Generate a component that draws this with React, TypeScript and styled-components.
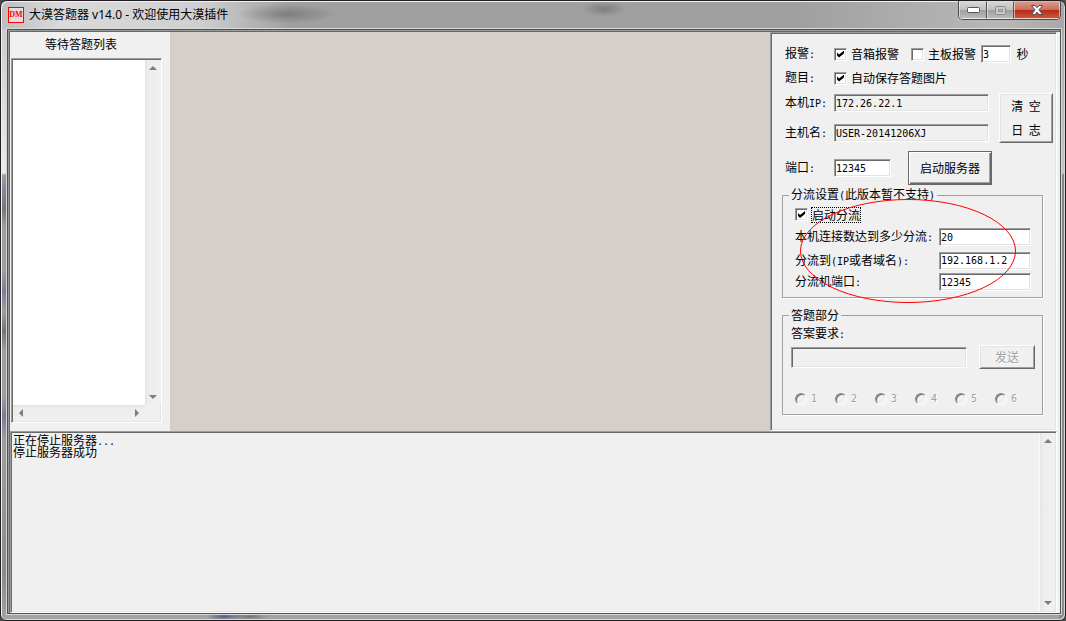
import React from "react";
import styled, { createGlobalStyle, css } from "styled-components";

const Global = createGlobalStyle`
  *, *::before, *::after { box-sizing: border-box; }
  html, body { margin: 0; background: #4b4b4b; }
  body, button, input { font: 12px/16px "Noto Sans CJK SC", sans-serif; color: #000; }
`;

const sunken = css`
  border: 1px solid;
  border-color: #9d9d9d #fff #fff #9d9d9d;
  box-shadow: inset 1px 1px #696969, inset -1px -1px #e3e3e3;
`;
const raised = css`
  border: 1px solid;
  border-color: #fff #696969 #696969 #fff;
  box-shadow: inset 1px 1px #e3e3e3, inset -1px -1px #a0a0a0;
`;

const Frame = styled.div`
  min-height: 100vh;
  display: flex;
  flex-direction: column;
  padding: 0 4px 6px 5px;
  border: 1px solid #201c22;
  border-radius: 7px 7px 6px 6px;
  box-shadow: inset 1px 1px #f2f2f2, inset -1px -1px #d8d8d8;
  background:
    radial-gradient(ellipse at center, #5e5e5e88, transparent 70%) 236px 3px / 100px 20px no-repeat,
    radial-gradient(ellipse at center, #66666699, transparent 70%) 580px 0 / 46px 16px no-repeat,
    radial-gradient(ellipse at center, #3c4a82cc, transparent 70%) 205px 100% / 36px 7px no-repeat,
    radial-gradient(ellipse at center, #55555599, transparent 70%) 228px 100% / 40px 7px no-repeat,
    linear-gradient(90deg, #bdbdbd 0, #dadada 60px, #cfcfcf 200px, #a0a0a0 290px, #a0a0a0 75%, #b8b8b8 94%, #a8a8a8 100%) 0 0 / 100% 28px no-repeat,
    linear-gradient(#c9c6c8 0, #eeeaea 172px, #a09da0 174px, #8582a0 190px, #777 208px, #a09da0 226px, #a09da0 270px, #7c7a9c 290px, #a09da0 310px, #757374 330px, #a09da0 350px, #a09da0 395px, #7c7a9c 415px, #a09da0 440px, #8b898b 575px, #a3a3a3 100%) 0 0 / 6px 100% no-repeat,
    linear-gradient(#a6a6a6 0, #c4c4c4 172px, #858585 174px, #8b8b8b 100%) 100% 0 / 6px 100% no-repeat,
    #a3a3a3;
`;

const TitleBar = styled.header`
  height: 27px;
  display: flex;
  align-items: center;
  padding-left: 2px;
`;
const AppIcon = styled.span`
  width: 16px;
  height: 16px;
  border: 1px solid #f00;
  color: #f00;
  background: #e2dcdc;
  font: bold 8px/14px "Liberation Serif", serif;
  display: flex;
  justify-content: center;
`;
const Title = styled.h1`
  flex: 1;
  margin: 0 0 0 5px;
  font: 12px/16px "Noto Sans", "Noto Sans CJK SC", sans-serif;
  white-space: nowrap;
`;
const Captions = styled.div`
  display: flex;
  align-self: flex-start;
  height: 19px;
  border: 1px solid #4c4a52;
  border-top: 0;
  border-radius: 0 0 5px 5px;
  overflow: hidden;
`;
const Caption = styled.button<{ $w: number; $close?: boolean }>`
  width: ${(p) => p.$w}px;
  padding: 0;
  border: 1px solid #ffffff88;
  border-right-color: ${(p) => (p.$close ? "#ffffff88" : "#55535a")};
  display: flex;
  align-items: center;
  justify-content: center;
  background: ${(p) =>
    p.$close
      ? "linear-gradient(#d99a8c 0, #cc6d5c 48%, #b32b15 50%, #d0553a 100%)"
      : "linear-gradient(#d5d5d5 0, #c0c0c0 48%, #9f9f9f 50%, #b9b9b9 100%)"};
`;

const Client = styled.main`
  flex: 1;
  display: flex;
  flex-direction: column;
  border: 1px solid #4e5250;
  outline: 1px solid #d4d8d6;
  margin: 1px 0 0 1px;
  padding: 1px 0 0 1px;
  background: #9b9b9b;
`;
const ClientInner = styled.div`
  flex: 1;
  display: flex;
  flex-direction: column;
  border-top: 1px solid #696969;
  border-left: 1px solid #696969;
  padding-right: 3px;
  background: #f0f0f0;
`;
const Upper = styled.div`
  display: flex;
`;

const Queue = styled.section`
  width: 160px;
  display: flex;
  flex-direction: column;
  padding: 0 8px 8px 0;
`;
const QueueTitle = styled.h2`
  margin: 0;
  padding: 4px 0 6px 35px;
  font: inherit;
`;
const QueueBox = styled.div`
  flex: 1;
  display: grid;
  grid-template: 1fr 16px / 1fr 16px;
  padding: 1px 0 1px 1px;
  margin-left: 1px;
  ${sunken}
  background: #f0f0f0;
`;
const QueueList = styled.ul`
  margin: 0;
  padding: 0;
  background: #fff;
`;
const Bar = styled.div<{ $row?: boolean }>`
  display: flex;
  flex-direction: ${(p) => (p.$row ? "row" : "column")};
  justify-content: space-between;
  background: linear-gradient(${(p) => (p.$row ? "180deg" : "90deg")}, #e3e3e3, #ededed 20%, #f0f0f0);
`;
const Arrow = styled.button`
  width: 16px;
  height: 16px;
  padding: 0;
  border: 0;
  background: none;
  display: flex;
  align-items: center;
  justify-content: center;
`;

const Canvas = styled.section`
  flex: 1;
  background: #d4cfc8;
`;

const Side = styled.form`
  width: 287px;
  padding: 9px 13px 15px 11px;
  ${sunken}
`;
const Row = styled.div<{ $h: number; $gap?: number }>`
  height: ${(p) => p.$h}px;
  display: flex;
  align-items: center;
  gap: ${(p) => p.$gap ?? 0}px;
  white-space: nowrap;
`;
const Settings = styled.div`
  padding-left: 3px;
  margin-right: -12px;
`;
const HostRows = styled.div`
  display: flex;
  gap: 10px;
  align-items: flex-start;
`;
const HostAction = styled.div`
  padding-top: 3px;
`;
const Name = styled.label`
  width: 49px;
  flex: none;
`;
const Half = styled.span`
  font: 10px/16px "DejaVu Sans Mono", monospace;
`;
const Field = styled.input<{ $w: number; $h?: number }>`
  width: ${(p) => p.$w}px;
  height: ${(p) => p.$h ?? 18}px;
  padding: 0 1px;
  border-radius: 0;
  outline: 0;
  font: 10px/14px "DejaVu Sans Mono", monospace;
  background: #fff;
  ${sunken}
  &:read-only, &:disabled { background: #f0f0f0; }
`;
const Check = styled.label<{ $w?: number; $focus?: boolean }>`
  display: flex;
  align-items: center;
  gap: 4px;
  width: ${(p) => (p.$w ? `${p.$w}px` : "auto")};
  span {
    line-height: 14px;
    outline: ${(p) => (p.$focus ? "1px dotted #000" : "0")};
  }
`;
const Tick = styled.input`
  appearance: none;
  width: 13px;
  height: 13px;
  margin: 0;
  background: #fff;
  ${sunken}
  &:checked::before {
    content: "";
    display: block;
    width: 7px;
    height: 7px;
    margin: 2px;
    background: #000;
    clip-path: polygon(0 29%, 29% 57%, 100% 0, 100% 43%, 29% 100%, 0 72%);
  }
`;
const Button = styled.button<{ $w: number; $h: number; $default?: boolean }>`
  width: ${(p) => p.$w}px;
  height: ${(p) => p.$h}px;
  flex: none;
  padding: 0;
  border-radius: 0;
  background: #f0f0f0;
  line-height: 24px;
  white-space: pre-line;
  ${raised}
  ${(p) =>
    p.$default &&
    css`
      border-color: #696969;
      box-shadow: inset 1px 1px #fff, inset -1px -1px #696969, inset -2px -2px #a0a0a0;
    `}
  &:disabled {
    color: #a0a0a0;
    line-height: 20px;
    text-shadow: 1px 1px #fff;
  }
`;

const Group = styled.fieldset`
  position: relative;
  min-width: 0;
  margin: 0 0 9px;
  padding: 0 0 5px 8px;
  border: 1px solid #a0a0a0;
  box-shadow: 1px 1px #fff;
  &:last-child { margin: 0; padding-bottom: 7px; }
`;
const Legend = styled.legend`
  padding: 0 2px;
  margin-left: -2px;
  line-height: 16px;
`;
const Options = styled.div`
  padding-left: 4px;
`;
const WideName = styled.label`
  width: 144px;
`;
const Mark = styled.svg`
  position: absolute;
  left: 16px;
  top: -6px;
  pointer-events: none;
`;
const Choices = styled.div`
  display: grid;
  grid-template-columns: repeat(6, 40px);
  padding-left: 4px;
  margin-top: 22px;
`;
const Choice = styled.label`
  display: flex;
  align-items: center;
  gap: 4px;
  color: #a0a0a0;
  text-shadow: 1px 1px #fff;
`;
const Radio = styled.input`
  appearance: none;
  width: 12px;
  height: 12px;
  margin: 0;
  border-radius: 50%;
  border: 1px solid;
  border-color: #8d8d8d #fff #fff #8d8d8d;
  box-shadow: inset 1px 1px #696969;
`;

const Log = styled.section`
  flex: 1;
  display: flex;
  min-height: 100px;
  padding: 1px;
  ${sunken}
`;
const LogText = styled.div`
  flex: 1;
  padding: 1px 0 0 1px;
  p { margin: 0; height: 12px; line-height: 12px; }
  ${Half} { line-height: 12px; }
`;
const LogBar = styled(Bar)`
  width: 16px;
  border-left: 1px solid #fafafa;
`;

const paths = {
  up: "M4 0L8 4H0Z",
  down: "M0 0H8L4 4Z",
  left: "M4 0V8L0 4Z",
  right: "M0 0L4 4L0 8Z",
};
const names = { up: "上", down: "下", left: "左", right: "右" };
function ScrollArrow({ dir }: { dir: keyof typeof paths }) {
  const tall = dir === "left" || dir === "right";
  return (
    <Arrow type="button" aria-label={names[dir]}>
      <svg width={tall ? 4 : 8} height={tall ? 8 : 4}>
        <path d={paths[dir]} fill="#7c7c7c" />
      </svg>
    </Arrow>
  );
}

export default function App() {
  return (
    <Frame>
      <Global />
      <TitleBar>
        <AppIcon>DM</AppIcon>
        <Title>大漠答题器 v14.0 - 欢迎使用大漠插件</Title>
        <Captions>
          <Caption $w={28} aria-label="最小化">
            <svg width="13" height="6"><rect x=".5" y=".5" width="12" height="5" rx="1" fill="#fff" stroke="#535666" /></svg>
          </Caption>
          <Caption $w={27} aria-label="最大化" disabled>
            <svg width="11" height="9" fill="none">
              <rect x=".5" y=".5" width="10" height="8" rx="1" fill="#c9c9c9" stroke="#8c8c8c" />
              <rect x="3.5" y="3.5" width="4" height="2" stroke="#8c8c8c" />
            </svg>
          </Caption>
          <Caption $w={46} $close aria-label="关闭">
            <svg width="12" height="10">
              <path d="M.5 .5H4L6 2.800L8 .5H11.500L8 5L11.500 9.500H8L6 7.200L4 9.500H.5L4 5Z" fill="#fff" stroke="#53525e" />
            </svg>
          </Caption>
        </Captions>
      </TitleBar>
      <Client>
        <ClientInner>
          <Upper>
            <Queue>
              <QueueTitle>等待答题列表</QueueTitle>
              <QueueBox>
                <QueueList />
                <Bar><ScrollArrow dir="up" /><ScrollArrow dir="down" /></Bar>
                <Bar $row><ScrollArrow dir="left" /><ScrollArrow dir="right" /></Bar>
              </QueueBox>
            </Queue>
            <Canvas />
            <Side>
              <Settings>
                <Row $h={24}>
                  <Name as="span">报警<Half>:</Half></Name>
                  <Check $w={77}><Tick type="checkbox" defaultChecked /><span>音箱报警</span></Check>
                  <Check $w={70}><Tick type="checkbox" /><span>主板报警</span></Check>
                  <Field $w={30} id="sec" defaultValue="3" />
                  <label htmlFor="sec">&nbsp; 秒</label>
                </Row>
                <Row $h={24}>
                  <Name as="span">题目<Half>:</Half></Name>
                  <Check><Tick type="checkbox" defaultChecked /><span>自动保存答题图片</span></Check>
                </Row>
                <HostRows>
                  <div>
                    <Row $h={26}>
                      <Name htmlFor="ip">本机<Half>IP:</Half></Name>
                      <Field $w={155} id="ip" readOnly value="172.26.22.1" />
                    </Row>
                    <Row $h={34}>
                      <Name htmlFor="host">主机名<Half>:</Half></Name>
                      <Field $w={155} id="host" readOnly value="USER-20141206XJ" />
                    </Row>
                  </div>
                  <HostAction>
                    <Button type="button" $w={54} $h={50}>{"清\u00a0\u00a0空\n日\u00a0\u00a0志"}</Button>
                  </HostAction>
                </HostRows>
                <Row $h={36} $gap={17}>
                  <div>
                    <Row $h={36}>
                      <Name htmlFor="port">端口<Half>:</Half></Name>
                      <Field $w={57} id="port" defaultValue="12345" />
                    </Row>
                  </div>
                  <Button type="button" $w={84} $h={34} $default>启动服务器</Button>
                </Row>
              </Settings>
              <Group>
                <Legend>分流设置<Half>(</Half>此版本暂不支持<Half>)</Half></Legend>
                <Options>
                  <Row $h={21}>
                    <Check $focus><Tick type="checkbox" defaultChecked /><span>启动分流</span></Check>
                  </Row>
                  <Row $h={24}>
                    <WideName htmlFor="max">本机连接数达到多少分流<Half>:</Half></WideName>
                    <Field $w={92} id="max" defaultValue="20" />
                  </Row>
                  <Row $h={23}>
                    <WideName htmlFor="to">分流到<Half>(IP</Half>或者域名<Half>):</Half></WideName>
                    <Field $w={92} id="to" defaultValue="192.168.1.2" />
                  </Row>
                  <Row $h={20}>
                    <WideName htmlFor="toport">分流机端口<Half>:</Half></WideName>
                    <Field $w={92} id="toport" defaultValue="12345" />
                  </Row>
                </Options>
                <Mark width="218" height="106">
                  <ellipse cx="109" cy="53" rx="107.500" ry="51.500" fill="none" stroke="#f00" />
                </Mark>
              </Group>
              <Group>
                <Legend>答题部分</Legend>
                <Row $h={22}>
                  <label htmlFor="answer">答案要求<Half>:</Half></label>
                </Row>
                <Row $h={24} $gap={12}>
                  <Field $w={176} $h={21} id="answer" disabled />
                  <Button type="button" $w={56} $h={24} disabled>发送</Button>
                </Row>
                <Choices>
                  {[1, 2, 3, 4, 5, 6].map((n) => (
                    <Choice key={n}>
                      <Radio type="radio" name="choice" disabled />
                      <Half>{n}</Half>
                    </Choice>
                  ))}
                </Choices>
              </Group>
            </Side>
          </Upper>
          <Log role="log">
            <LogText>
              <p>正在停止服务器<Half>...</Half></p>
              <p>停止服务器成功</p>
            </LogText>
            <LogBar><ScrollArrow dir="up" /><ScrollArrow dir="down" /></LogBar>
          </Log>
        </ClientInner>
      </Client>
    </Frame>
  );
}
